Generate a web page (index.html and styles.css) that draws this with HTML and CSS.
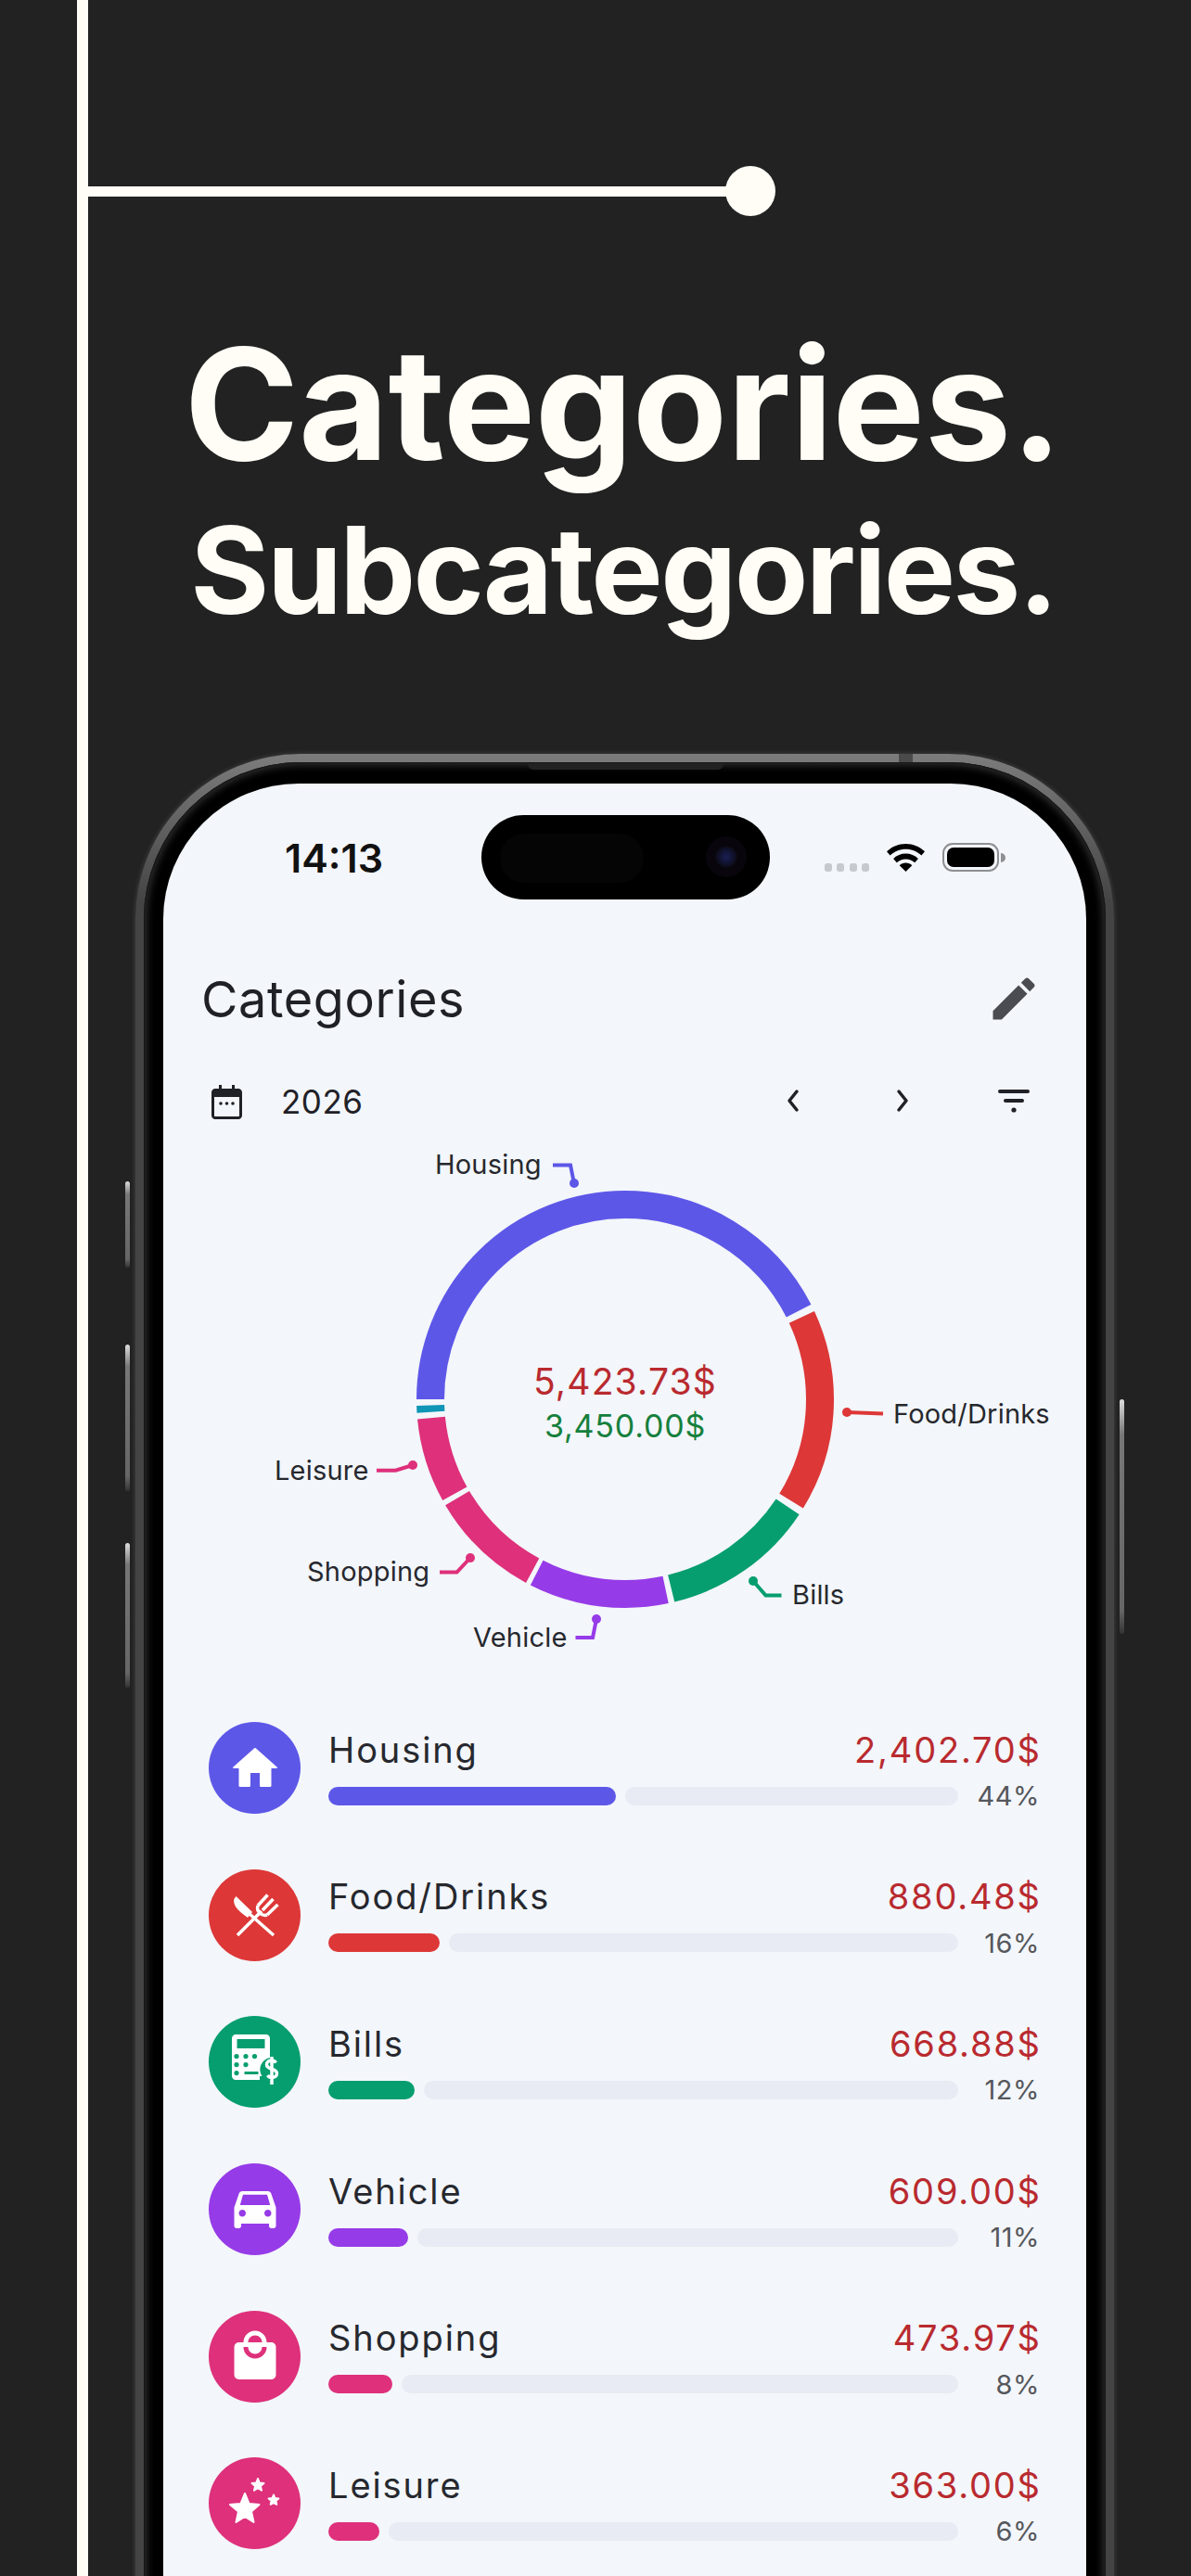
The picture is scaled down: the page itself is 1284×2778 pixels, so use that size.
FILE: index.html
```html
<!DOCTYPE html>
<html lang="en">
<head>
    <meta charset="UTF-8">
    <meta name="viewport" content="width=device-width, initial-scale=1.0">
    <title>Categories</title>
    <link rel="stylesheet" href="styles.css">
</head>
<body>
    <div class="rail"></div>
    <div class="rail-branch"><span class="rail-dot"></span></div>

    <header class="hero">
        <h1>Categories.</h1>
        <h2>Subcategories.</h2>
    </header>

    <div class="phone">
        <span class="side-btn btn-1"></span>
        <span class="side-btn btn-2"></span>
        <span class="side-btn btn-3"></span>
        <span class="side-btn btn-4"></span>
        <span class="antenna"></span>
        <div class="bezel">
            <span class="speaker"></span>
            <div class="screen">
                <div class="status-bar">
                    <span class="time">14:13</span>
                    <div class="island"><span class="island-glass"></span><span class="camera"></span></div>
                    <div class="status-icons">
                        <span class="signal"><i></i><i></i><i></i><i></i></span>
                        <svg class="wifi" viewBox="0 0 41 30"><path d="M20.5 0C12.6 0 5.6 3.1 0 8.2l3.6 4.4C8.2 8.300 14 5.800 20.500 5.800s12.300 2.500 16.900 6.800L41 8.200C35.400 3.100 28.400 0 20.500 0z"/><path d="M20.500 10.500c-5.100 0-9.800 2-13.400 5.400l3.700 4.400c2.600-2.400 6-3.900 9.700-3.900s7.100 1.500 9.700 3.900l3.700-4.400c-3.600-3.400-8.300-5.400-13.400-5.400z"/><path d="M20.500 20.500c-2.700 0-5 1-6.800 2.700l6.800 6.800 6.800-6.800c-1.800-1.700-4.100-2.700-6.800-2.700z"/></svg>
                        <span class="battery"><span class="battery-fill"></span></span>
                        <span class="battery-cap"></span>
                    </div>
                </div>

                <div class="title-row">
                    <span class="page-title">Categories</span>
                    <svg class="icon-edit" viewBox="0 0 24 24"><path d="M3 17.250V21h3.750L17.810 9.940l-3.750-3.750L3 17.250zM20.710 7.040c.39-.39.39-1.020 0-1.410l-2.340-2.340c-.39-.39-1.020-.39-1.410 0l-1.830 1.830 3.750 3.750 1.830-1.830z"/></svg>
                </div>

                <div class="period-row">
                    <svg class="icon-calendar" viewBox="0 0 33 37"><path d="M8 0h3v4h11V0h3v4h4c2.200 0 4 1.800 4 4v25c0 2.200-1.800 4-4 4H4c-2.200 0-4-1.800-4-4V8c0-2.200 1.800-4 4-4h4V0zM3 13v20c0 .6.400 1 1 1h25c.6 0 1-.4 1-1V13H3z"/><circle cx="10" cy="20" r="1.800"/><circle cx="16.500" cy="20" r="1.800"/><circle cx="23" cy="20" r="1.800"/></svg>
                    <span class="year">2026</span>
                    <div class="period-actions">
                        <svg class="icon-chevron" viewBox="0 0 16 26"><path d="M12 3 4 13l8 10"/></svg>
                        <svg class="icon-chevron" viewBox="0 0 16 26"><path d="M4 3l8 10-8 10"/></svg>
                        <svg class="icon-filter" viewBox="0 0 34 26"><rect x="0" y="1" width="34" height="4" rx="2"/><rect x="6" y="11" width="22" height="4" rx="2"/><circle cx="17" cy="23" r="2.600"/></svg>
                    </div>
                </div>

                <svg class="donut" viewBox="176 1230 995 570">
                    <g class="ring" transform="rotate(180 674 1508)">
                        <circle cx="674" cy="1508" r="210" pathLength="360" stroke="#5d57e8" stroke-dasharray="153 207"/>
                        <circle cx="674" cy="1508" r="210" pathLength="360" stroke="#dd3737" stroke-dasharray="56.500 303.500" stroke-dashoffset="-155"/>
                        <circle cx="674" cy="1508" r="210" pathLength="360" stroke="#069e6f" stroke-dasharray="42.800 317.200" stroke-dashoffset="-213.500"/>
                        <circle cx="674" cy="1508" r="210" pathLength="360" stroke="#963be8" stroke-dasharray="39 321" stroke-dashoffset="-258"/>
                        <circle cx="674" cy="1508" r="210" pathLength="360" stroke="#de307b" stroke-dasharray="31.100 328.900" stroke-dashoffset="-298.400"/>
                        <circle cx="674" cy="1508" r="210" pathLength="360" stroke="#de307b" stroke-dasharray="23.500 336.500" stroke-dashoffset="-331"/>
                        <circle cx="674" cy="1508" r="210" pathLength="360" stroke="#0f95b5" stroke-dasharray="2 358" stroke-dashoffset="-356.200"/>
                    </g>

                    <g class="leader">
                        <path stroke="#5d57e8" d="M596 1255.500h19l4 20"/>
                        <circle fill="#5d57e8" cx="619" cy="1275" r="5"/>
                        <path stroke="#dd3737" d="M913 1522l39 1.500"/>
                        <circle fill="#dd3737" cx="913" cy="1522" r="5"/>
                        <path stroke="#069e6f" d="M812 1704l13.500 15.500h17"/>
                        <circle fill="#069e6f" cx="812" cy="1704" r="5"/>
                        <path stroke="#963be8" d="M643 1745l-4 20h-18.500"/>
                        <circle fill="#963be8" cx="643" cy="1745" r="5"/>
                        <path stroke="#de307b" d="M507 1679l-14.500 15.500H474"/>
                        <circle fill="#de307b" cx="507" cy="1679" r="5"/>
                        <path stroke="#de307b" d="M445 1579l-18.500 5.700H406"/>
                        <circle fill="#de307b" cx="445" cy="1579" r="5"/>
                    </g>

                    <g class="chart-label">
                        <text x="469" y="1265">Housing</text>
                        <text x="963" y="1534">Food/Drinks</text>
                        <text x="854" y="1729">Bills</text>
                        <text x="510" y="1775">Vehicle</text>
                        <text x="331" y="1704">Shopping</text>
                        <text x="296" y="1595">Leisure</text>
                    </g>

                    <text class="total-spent" x="674" y="1503">5,423.73$</text>
                    <text class="total-budget" x="674" y="1549">3,450.00$</text>
                </svg>

                <ul class="cat-list">
                    <li class="cat-row">
                        <span class="cat-icon housing">
                            <svg viewBox="0 0 24 24"><path d="M10 19.500V14h4v5.500a.5.5 0 0 0 .5.5h4a.5.5 0 0 0 .5-.5V12h2.300c.3 0 .4-.3.2-.5L12.300 3.300a.5.5 0 0 0-.6 0L2.500 11.500c-.2.200-.1.500.2.500H5v7.500a.5.5 0 0 0 .5.5h4a.5.5 0 0 0 .5-.5z"/></svg>
                        </span>
                        <div class="cat-body">
                            <div class="cat-top"><span class="cat-name">Housing</span><span class="cat-amount">2,402.70$</span></div>
                            <div class="cat-bottom">
                                <span class="bar housing" style="width:310px"></span>
                                <span class="track"></span>
                                <span class="cat-pct">44%</span>
                            </div>
                        </div>
                    </li>
                    <li class="cat-row">
                        <span class="cat-icon food">
                            <svg viewBox="0 0 60 60"><path d="M9.500 10 27 27l-5 6-4-3C12 25 6 20 7.300 13z"/><g class="icon-line"><path d="M11 52 37 26"/><path d="M15 21l35 31"/><path d="M38 25l11.500-12"/><path d="M33 20 43.500 8.500"/><path d="M43 30l11.500-11"/><path d="M33 20c-2 6 4 12 10 10"/></g></svg>
                        </span>
                        <div class="cat-body">
                            <div class="cat-top"><span class="cat-name">Food/Drinks</span><span class="cat-amount">880.48$</span></div>
                            <div class="cat-bottom">
                                <span class="bar food" style="width:120px"></span>
                                <span class="track"></span>
                                <span class="cat-pct">16%</span>
                            </div>
                        </div>
                    </li>
                    <li class="cat-row">
                        <span class="cat-icon bills">
                            <svg viewBox="0 0 60 60"><path fill-rule="evenodd" d="M11 0h33c2 0 4 2 4 4v21a13 13 0 0 0-8.500 20H37v4H11c-2 0-4-2-4-4V4c0-2 2-4 4-4zm1.500 5v10h30V5h-30zM12 21a2.600 2.600 0 1 0 0 5.200A2.600 2.600 0 0 0 12 21zm10 0a2.600 2.600 0 1 0 0 5.200 2.600 2.600 0 0 0 0-5.200zm9.500 0a2.600 2.600 0 1 0 0 5.200 2.600 2.600 0 0 0 0-5.200zM12 30a2.600 2.600 0 1 0 0 5.200A2.600 2.600 0 0 0 12 30zm10 0a2.600 2.600 0 1 0 0 5.200 2.600 2.600 0 0 0 0-5.200zM12 39a2.600 2.600 0 1 0 0 5.200 2.600 2.600 0 0 0 0-5.200zm8.500 1v3h15v-3h-15z" transform="translate(-2 0)"/><path class="icon-line" d="M52.500 30.500c-1-1.500-2.500-2.500-4.500-2.500-3 0-5.500 1.500-5.500 4.500 0 6 11 3.500 11 9.500 0 3-2.500 4.500-5.500 4.500-2 0-3.500-1-4.500-2.500M48 24v30"/></svg>
                        </span>
                        <div class="cat-body">
                            <div class="cat-top"><span class="cat-name">Bills</span><span class="cat-amount">668.88$</span></div>
                            <div class="cat-bottom">
                                <span class="bar bills" style="width:93px"></span>
                                <span class="track"></span>
                                <span class="cat-pct">12%</span>
                            </div>
                        </div>
                    </li>
                    <li class="cat-row">
                        <span class="cat-icon vehicle">
                            <svg viewBox="0 0 24 24"><path d="M18.920 5.010C18.720 4.420 18.160 4 17.500 4h-11c-.66 0-1.210.42-1.420 1.010L3 11v8c0 .55.45 1 1 1h1c.55 0 1-.45 1-1v-1h12v1c0 .55.45 1 1 1h1c.55 0 1-.45 1-1v-8l-2.080-5.990zM6.500 15c-.83 0-1.500-.67-1.500-1.500S5.670 12 6.500 12s1.500.67 1.500 1.500S7.330 15 6.500 15zm11 0c-.83 0-1.500-.67-1.500-1.500s.67-1.500 1.500-1.500 1.500.67 1.500 1.500-.67 1.500-1.500 1.500zM5.500 10l1.300-4.500h10.400L18.500 10h-13z"/></svg>
                        </span>
                        <div class="cat-body">
                            <div class="cat-top"><span class="cat-name">Vehicle</span><span class="cat-amount">609.00$</span></div>
                            <div class="cat-bottom">
                                <span class="bar vehicle" style="width:86px"></span>
                                <span class="track"></span>
                                <span class="cat-pct">11%</span>
                            </div>
                        </div>
                    </li>
                    <li class="cat-row">
                        <span class="cat-icon shopping">
                            <svg viewBox="0 0 24 24"><path d="M19 6h-2c0-2.760-2.240-5-5-5S7 3.240 7 6H5c-1.100 0-1.990.9-1.990 2L3 20c0 1.100.9 2 2 2h14c1.100 0 2-.9 2-2V8c0-1.100-.9-2-2-2zm-7-3c1.660 0 3 1.340 3 3H9c0-1.660 1.340-3 3-3zm0 10c-2.760 0-5-2.240-5-5h2c0 1.660 1.340 3 3 3s3-1.340 3-3h2c0 2.760-2.240 5-5 5z"/></svg>
                        </span>
                        <div class="cat-body">
                            <div class="cat-top"><span class="cat-name">Shopping</span><span class="cat-amount">473.97$</span></div>
                            <div class="cat-bottom">
                                <span class="bar shopping" style="width:69px"></span>
                                <span class="track"></span>
                                <span class="cat-pct">8%</span>
                            </div>
                        </div>
                    </li>
                    <li class="cat-row">
                        <span class="cat-icon leisure">
                            <svg viewBox="0 0 60 60"><path class="icon-star" d="M19 19l4.500 11 11 1-8.500 7.500 2.500 11.500-9.500-6-9.500 6 2.500-11.500L3 31l11.500-1z"/><path class="icon-star" d="M33 3l1.800 4.500 4.700.4-3.600 3 1.100 4.800-4-2.500-4 2.500 1.100-4.800-3.600-3 4.700-.4z"/><path class="icon-star" d="M50 20.500l1.500 3.600 3.900.3-3 2.600.9 3.800-3.300-2-3.300 2 .9-3.800-3-2.600 3.900-.3z"/></svg>
                        </span>
                        <div class="cat-body">
                            <div class="cat-top"><span class="cat-name">Leisure</span><span class="cat-amount">363.00$</span></div>
                            <div class="cat-bottom">
                                <span class="bar leisure" style="width:55px"></span>
                                <span class="track"></span>
                                <span class="cat-pct">6%</span>
                            </div>
                        </div>
                    </li>
                </ul>
            </div>
        </div>
    </div>
</body>
</html>
```
FILE: styles.css
```css
html, body {
    margin: 0;
    padding: 0;
}

body {
    position: relative;
    width: 1284px;
    height: 2778px;
    overflow: hidden;
    background-color: #222222;
    font-family: Inter, "Liberation Sans", sans-serif;
}

/* decoration line on the left */
.rail {
    position: absolute;
    left: 83px;
    top: 0;
    width: 12px;
    height: 100%;
    background-color: #fffdf6;
}

.rail-branch {
    position: absolute;
    left: 95px;
    top: 201px;
    width: 700px;
    height: 11px;
    background-color: #fffdf6;
}

.rail-dot {
    position: absolute;
    left: 687px;
    top: -22px;
    width: 54px;
    height: 54px;
    border-radius: 50%;
    background-color: #fffdf6;
}

/* hero */
.hero {
    padding: 352px 0 0 60px;
    height: 813px;
    box-sizing: border-box;
    text-align: center;
    color: #fffdf6;
}

.hero h1 {
    margin: 0 0 31px;
    font-size: 167px;
    line-height: 167px;
    font-weight: 700;
    letter-spacing: -.4px;
}

.hero h2 {
    margin: 0;
    font-size: 130px;
    line-height: 130px;
    font-weight: 700;
    letter-spacing: -2.600px;
}

/* phone */
.phone {
    position: relative;
    box-sizing: border-box;
    width: 1055px;
    height: 2100px;
    margin-left: 146px;
    padding: 9px 9px 0;
    border-radius: 178px 178px 0 0;
    background: linear-gradient(#7c7c7c, #444 160px);
    box-shadow: 0 0 4px 1px rgba(110, 110, 110, .35);
}

.bezel {
    position: relative;
    height: 100%;
    padding: 23px 21px 0;
    box-sizing: border-box;
    border-radius: 169px 169px 0 0;
    background-color: #000;
    box-shadow: inset 0 0 0 1px #161616, inset 0 0 9px 3px #333;
}

.speaker {
    position: absolute;
    left: 414px;
    top: 1px;
    width: 211px;
    height: 7px;
    border-radius: 0 0 6px 6px;
    background-color: #222;
}

.antenna {
    position: absolute;
    left: 823px;
    top: 0;
    width: 15px;
    height: 9px;
    background-color: #4a4a4a;
}

.side-btn {
    position: absolute;
    width: 5px;
    border-radius: 3px;
    background: linear-gradient(#ddd, #777 15%, #666 90%, #333);
}

.btn-1 { left: -11px; top: 461px; height: 93px; }
.btn-2 { left: -11px; top: 637px; height: 158px; }
.btn-3 { left: -11px; top: 851px; height: 156px; }
.btn-4 { right: -11px; top: 696px; height: 253px; }

.screen {
    height: 100%;
    padding: 0 50px 0 41px;
    border-radius: 146px 146px 0 0;
    background-color: #f3f6fa;
    color: #1f2127;
}

/* status bar */
.status-bar {
    position: relative;
    display: flex;
    align-items: center;
    justify-content: space-between;
    height: 160px;
}

.time {
    margin-left: 90px;
    font-size: 43px;
    font-weight: 600;
    color: #111;
}

.island {
    position: absolute;
    left: 302px;
    top: 34px;
    width: 311px;
    height: 91px;
    border-radius: 46px;
    background-color: #000;
}

.island-glass {
    position: absolute;
    left: 20px;
    top: 20px;
    width: 155px;
    height: 53px;
    border-radius: 26px;
    background-color: #050505;
}

.camera {
    position: absolute;
    left: 252px;
    top: 33px;
    width: 24px;
    height: 24px;
    border-radius: 50%;
    background: radial-gradient(circle, #1b1f55 0, #10122e 45%, #0b0a12 70%);
    box-shadow: 0 0 0 10px #08060c;
}

.status-icons {
    display: flex;
    align-items: center;
    margin-right: 37px;
    margin-top: -1px;
}

.signal {
    display: flex;
    gap: 5.300px;
    margin-right: 19px;
    margin-top: 21px;
}

.signal i {
    width: 8px;
    height: 9px;
    border-radius: 3px;
    background-color: #c6c9cd;
}

.wifi {
    width: 41px;
    height: 30px;
    margin-right: 19px;
}

.battery {
    box-sizing: border-box;
    display: block;
    width: 61px;
    height: 31px;
    padding: 3px;
    border: 2px solid #8e8f92;
    border-radius: 11px;
}

.battery-fill {
    display: block;
    height: 100%;
    border-radius: 7px;
    background-color: #000;
}

.battery-cap {
    width: 5px;
    height: 10px;
    margin-left: 2px;
    border-radius: 0 5px 5px 0;
    background-color: #8e8f92;
}

/* headers */
.title-row {
    display: flex;
    align-items: center;
    justify-content: space-between;
    height: 64px;
    margin-top: 40px;
}

.page-title {
    font-size: 54px;
    font-weight: 400;
    letter-spacing: .6px;
}

.icon-edit {
    width: 60px;
    height: 60px;
    margin-right: -2px;
    fill: #4a4c52;
}

.period-row {
    display: flex;
    align-items: center;
    height: 50px;
    margin-top: 54px;
}

.icon-calendar {
    width: 33px;
    height: 37px;
    margin-left: 11px;
    fill: #1f2127;
}

.year {
    margin-left: 42px;
    font-size: 35px;
    letter-spacing: .5px;
}

.period-actions {
    display: flex;
    align-items: center;
    margin-left: auto;
    margin-right: 11px;
    margin-bottom: 2px;
}

.icon-chevron {
    width: 16px;
    height: 26px;
    margin-right: 102px;
    fill: none;
    stroke: #1f2127;
    stroke-width: 3.500;
    stroke-linecap: round;
    stroke-linejoin: round;
}

.icon-filter {
    width: 34px;
    height: 26px;
    margin-left: -7px;
    fill: #1f2127;
}

/* donut */
.donut {
    display: block;
    width: 995px;
    height: 570px;
    margin: 18px -50px 0 -41px;
}

.ring circle {
    fill: none;
    stroke-width: 30;
}

.leader path {
    fill: none;
    stroke-width: 4;
}

.chart-label text {
    font-size: 29px;
    letter-spacing: .2px;
    fill: #26282e;
}

.total-spent {
    font-size: 39px;
    letter-spacing: 1.200px;
    text-anchor: middle;
    fill: #b92a2f;
}

.total-budget {
    font-size: 34px;
    letter-spacing: .8px;
    text-anchor: middle;
    fill: #15803d;
}

/* category list */
.cat-list {
    margin: 56px 0 0;
    padding: 0;
    list-style: none;
}

.cat-row {
    display: flex;
    align-items: center;
    gap: 30px;
    height: 99px;
    margin-bottom: 59.700px;
    margin-left: 8px;
}

.cat-icon {
    flex: none;
    display: flex;
    align-items: center;
    justify-content: center;
    width: 99px;
    height: 99px;
    border-radius: 50%;
}

.cat-icon svg {
    width: 60px;
    height: 60px;
    fill: #fff;
}

.icon-line {
    fill: none;
    stroke: #fff;
    stroke-width: 3.500;
}

.icon-star {
    stroke: #fff;
    stroke-width: 2;
    stroke-linejoin: round;
}

.cat-icon.housing, .bar.housing { background-color: #5d57e8; }
.cat-icon.food, .bar.food { background-color: #dd3737; }
.cat-icon.bills, .bar.bills { background-color: #069e6f; }
.cat-icon.vehicle, .bar.vehicle { background-color: #963be8; }
.cat-icon.shopping, .bar.shopping { background-color: #de307b; }
.cat-icon.leisure, .bar.leisure { background-color: #de307b; }

.cat-body {
    flex: 1;
}

.cat-top {
    display: flex;
    align-items: baseline;
    justify-content: space-between;
    height: 58px;
    padding-top: 2px;
}

.cat-name {
    font-size: 38px;
    letter-spacing: 1.900px;
    color: #26282e;
}

.cat-amount {
    margin-right: -1.800px;
    font-size: 38px;
    letter-spacing: 1.800px;
    color: #b92a2f;
}

.cat-bottom {
    display: flex;
    align-items: center;
    height: 30px;
}

.bar {
    flex: none;
    height: 20px;
    border-radius: 10px;
}

.track {
    flex: 1;
    height: 20px;
    margin-left: 10px;
    border-radius: 10px;
    background-color: #e8ebf3;
}

.cat-pct {
    width: 88px;
    text-align: right;
    font-size: 29px;
    letter-spacing: .5px;
    color: #55575c;
}
```
